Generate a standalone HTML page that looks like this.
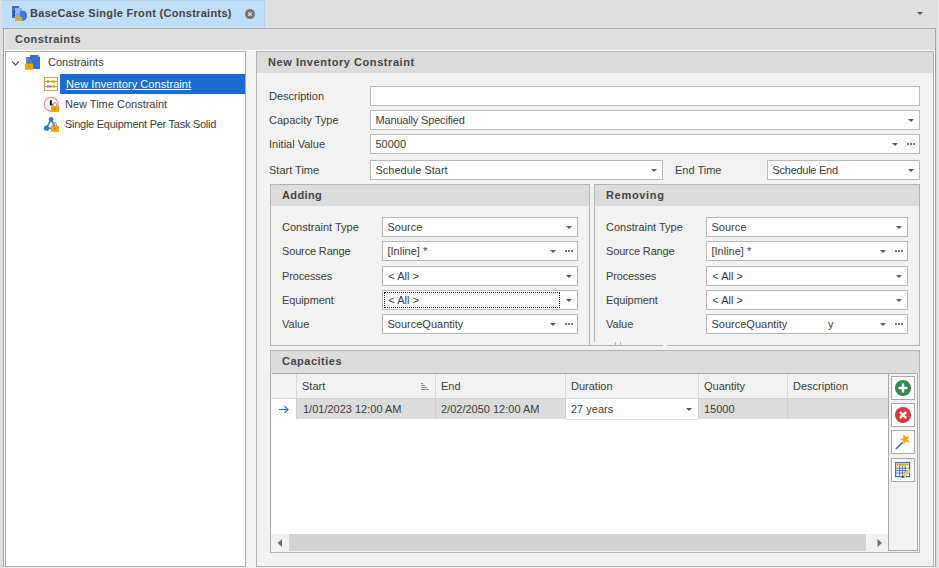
<!DOCTYPE html>
<html><head><meta charset="utf-8"><style>
*{box-sizing:border-box;margin:0;padding:0}
html,body{width:939px;height:568px;overflow:hidden}
body{background:#dfdfdf;position:relative;font-family:"Liberation Sans",sans-serif;font-size:11px;color:#333}
.a{position:absolute}
.t{position:absolute;white-space:pre;line-height:13px;color:#3c3c3c}
.b{font-weight:bold;color:#454545}
.box{position:absolute;background:#fff;border:1px solid #b9b9b9}
.arr{position:absolute;width:0;height:0;border-left:3.5px solid transparent;border-right:3.5px solid transparent;border-top:3.5px solid #5a5a5a}
.ell{position:absolute;width:8px;height:2px;background:linear-gradient(90deg,#767676 0 2px,transparent 2px 3px,#767676 3px 5px,transparent 5px 6px,#767676 6px 8px)}
</style></head><body>
<div class="a" style="left:2px;top:0px;width:263px;height:28px;background:#bfdef9;border-top:1px solid #b5d0ea;border-right:1px solid #b5cfe8"></div>
<div class="t b" style="left:30px;top:7px;letter-spacing:0.3px">BaseCase Single Front (Constraints)</div>
<svg class="a" style="left:245px;top:9px" width="11" height="11" viewBox="0 0 11 11"><circle cx="5" cy="5.1" r="5" fill="#747474"/><path d="M3.3 3.4 L6.7 6.8 M6.7 3.4 L3.3 6.8" stroke="#d0e6fa" stroke-width="1.3"/></svg>
<div class="arr" style="left:917px;top:12px;border-top-color:#555"></div>
<svg class="a" style="left:11px;top:5px" width="17" height="17" viewBox="0 0 17 17">
<rect x="1" y="1" width="7" height="12" fill="#3b70c6"/>
<circle cx="3.3" cy="6.3" r="0.8" fill="#0b2c80"/><circle cx="3.3" cy="8.3" r="0.8" fill="#0b2c80"/><circle cx="3.3" cy="10.5" r="0.8" fill="#0b2c80"/>
<rect x="4" y="3" width="7" height="13" fill="#8db8ef"/>
<path d="M9 5.7 H12.5 A3.5 5 0 0 1 12.5 15.7 H9 Z" fill="#3c7bd9"/>
<path d="M6 13 V10.5 A1.6 1.6 0 0 1 9.2 10.5 V13" fill="none" stroke="#7d8fa8" stroke-width="1"/>
<rect x="5" y="12" width="6" height="4" fill="#f6a800"/>
<rect x="7.3" y="13.2" width="1.4" height="1.6" fill="#b88a30"/>
</svg>
<div class="a" style="left:2px;top:28px;width:934px;height:1px;background:#a9a9a9;"></div>
<div class="a" style="left:3px;top:29px;width:1px;height:538px;background:#a6a6a6;"></div>
<div class="a" style="left:935px;top:29px;width:1px;height:538px;background:#a6a6a6;"></div>
<div class="a" style="left:938px;top:0px;width:1px;height:568px;background:#ebebeb;"></div>
<div class="t b" style="left:15px;top:33px;letter-spacing:0.45px">Constraints</div>
<div class="a" style="left:4px;top:50px;width:931px;height:1px;background:#fbfbfb;"></div>
<div class="a" style="left:4px;top:29px;width:1px;height:22px;background:#ececec;"></div>
<div class="a" style="left:3px;top:567px;width:933px;height:1px;background:#efefef;"></div>
<div class="a" style="left:5px;top:51px;width:241px;height:516px;border:1px solid #ababab;background:#fff;"></div>
<div class="a" style="left:4px;top:51px;width:1px;height:516px;background:#f2f2f2;"></div>
<div class="a" style="left:246px;top:51px;width:10px;height:516px;background:#f2f2f2;"></div>
<svg class="a" style="left:11px;top:60px" width="9" height="7" viewBox="0 0 9 7"><path d="M1 1.5 L4.5 5 L8 1.5" fill="none" stroke="#5a5a5a" stroke-width="1.3"/></svg>
<svg class="a" style="left:24px;top:54px" width="17" height="17" viewBox="0 0 17 17">
<rect x="2" y="3" width="6" height="12" fill="#3d78cf"/>
<rect x="2.5" y="3.5" width="1" height="5" fill="#7fa6e0"/>
<path d="M6 1 H14 L16 3 V15 H6 Z" fill="#3872c8"/>
<path d="M14 1 L16 3 H14 Z" fill="#8db4ec"/>
<path d="M3 10 V8 A2 2 0 0 1 7 8 V10" fill="none" stroke="#808890" stroke-width="1.1"/>
<rect x="1" y="9.6" width="8" height="6.2" fill="#f5a700"/>
<rect x="4.4" y="12" width="1.3" height="1.6" fill="#a8803a"/>
</svg>
<div class="t " style="left:48px;top:56px;">Constraints</div>
<div class="a" style="left:60px;top:74px;width:185px;height:20px;background:#1c6bd3;"></div>
<div class="t" style="left:66px;top:78px;color:#fff;text-decoration:underline;letter-spacing:0.07px">New Inventory Constraint</div>
<svg class="a" style="left:43px;top:76px" width="17" height="17" viewBox="0 0 17 17">
<rect x="1.5" y="1.5" width="13" height="13" fill="#fff" stroke="#c8a456" stroke-width="1.1"/>
<path d="M1.5 5.5 H14.5 M1.5 10.5 H14.5" stroke="#c8a456" stroke-width="1"/>
<circle cx="5" cy="5.5" r="1.35" fill="#8a8a8a"/>
<rect x="8" y="4.2" width="4.4" height="2.7" rx="1.2" fill="#f7a800"/>
<circle cx="5" cy="10.5" r="1.35" fill="#8a8a8a"/><circle cx="7.6" cy="10.5" r="1.35" fill="#8a8a8a"/>
<circle cx="10.9" cy="10.5" r="1.4" fill="#f7a800"/>
</svg>
<div class="t " style="left:65px;top:98px;">New Time Constraint</div>
<svg class="a" style="left:42px;top:95px" width="18" height="18" viewBox="0 0 18 18">
<circle cx="9.2" cy="9.2" r="6.9" fill="#fff" stroke="#fb8a8a" stroke-width="1.3"/>
<rect x="7.8" y="5.2" width="2" height="5.2" fill="#111"/>
<rect x="9.6" y="9" width="1.8" height="1.4" fill="#333"/>
<path d="M11 11 V9.5 A1.8 1.8 0 0 1 14.6 9.5 V11" fill="none" stroke="#8a8a8a" stroke-width="1"/>
<rect x="9" y="11" width="8" height="6" fill="#f5a700"/>
<rect x="12.3" y="12.6" width="1.3" height="2.8" fill="#a8803a"/>
</svg>
<div class="t " style="left:65px;top:118px;letter-spacing:-0.27px">Single Equipment Per Task Solid</div>
<svg class="a" style="left:42px;top:115px" width="18" height="18" viewBox="0 0 18 18">
<path d="M9.1 4.4 L4.5 13.2 H14 Z" fill="none" stroke="#3b74cf" stroke-width="1.6"/>
<circle cx="9.1" cy="4.4" r="2.4" fill="#3b74cf"/>
<circle cx="4.5" cy="13.2" r="2.6" fill="#3b74cf"/>
<path d="M11 11 V9.5 A1.8 1.8 0 0 1 14.6 9.5 V11" fill="none" stroke="#8a8a8a" stroke-width="1"/>
<rect x="9" y="11" width="8" height="6" fill="#f5a700"/>
<rect x="12.3" y="12.6" width="1.3" height="2.8" fill="#a8803a"/>
</svg>
<div class="a" style="left:49px;top:137px;width:6px;height:1px;background:#e6e6e6;"></div>
<div class="a" style="left:256px;top:51px;width:678px;height:516px;border:1px solid #b3b3b3;background:#f2f2f2;"></div>
<div class="a" style="left:934px;top:51px;width:1px;height:516px;background:#f8f8f8;"></div>
<div class="a" style="left:257px;top:52px;width:676px;height:21px;background:#dcdcdc;"></div>
<div class="t b" style="left:268px;top:56px;letter-spacing:0.56px">New Inventory Constraint</div>
<div class="t " style="left:269px;top:90px;">Description</div>
<div class="a" style="left:370px;top:86px;width:550px;height:20px;border:1px solid #b9b9b9;background:#fff;"></div>
<div class="t " style="left:269px;top:114px;">Capacity Type</div>
<div class="a" style="left:370px;top:110px;width:550px;height:20px;border:1px solid #b9b9b9;background:#fff;"></div>
<div class="t " style="left:375.5px;top:114px;letter-spacing:-0.17px">Manually Specified</div>
<div class="arr" style="left:908px;top:119px"></div>
<div class="t " style="left:269px;top:138px;">Initial Value</div>
<div class="a" style="left:370px;top:134px;width:550px;height:20px;border:1px solid #b9b9b9;background:#fff;"></div>
<div class="t " style="left:375.5px;top:138px;">50000</div>
<div class="arr" style="left:892px;top:143px"></div>
<div class="ell" style="left:907px;top:143px"></div>
<div class="t " style="left:269px;top:164px;">Start Time</div>
<div class="a" style="left:370px;top:160px;width:293px;height:20px;border:1px solid #b9b9b9;background:#fff;"></div>
<div class="t " style="left:375.5px;top:164px;">Schedule Start</div>
<div class="arr" style="left:651px;top:169px"></div>
<div class="t " style="left:675px;top:164px;">End Time</div>
<div class="a" style="left:767px;top:160px;width:153px;height:20px;border:1px solid #b9b9b9;background:#fff;"></div>
<div class="t " style="left:772.5px;top:164px;letter-spacing:-0.27px">Schedule End</div>
<div class="arr" style="left:908px;top:169px"></div>
<div class="a" style="left:270px;top:184px;width:320px;height:162px;border:1px solid #b3b3b3;background:transparent;"></div>
<div class="a" style="left:271px;top:185px;width:318px;height:21px;background:#dcdcdc;"></div>
<div class="t b" style="left:282px;top:189px;letter-spacing:0.38px">Adding</div>
<div class="t " style="left:282px;top:221px;letter-spacing:0px">Constraint Type</div>
<div class="a" style="left:382px;top:217px;width:196px;height:20px;border:1px solid #b9b9b9;background:#fff;"></div>
<div class="t " style="left:387.5px;top:221px;">Source</div>
<div class="arr" style="left:566px;top:226px"></div>
<div class="t " style="left:282px;top:245px;letter-spacing:-0.15px">Source Range</div>
<div class="a" style="left:382px;top:241px;width:196px;height:20px;border:1px solid #b9b9b9;background:#fff;"></div>
<div class="t " style="left:387.5px;top:245px;">[Inline] *</div>
<div class="arr" style="left:550px;top:250px"></div>
<div class="ell" style="left:565px;top:250px"></div>
<div class="t " style="left:282px;top:270px;letter-spacing:-0.15px">Processes</div>
<div class="a" style="left:382px;top:266px;width:196px;height:20px;border:1px solid #b9b9b9;background:#fff;"></div>
<div class="t " style="left:388.3px;top:270px;">&lt; All &gt;</div>
<div class="arr" style="left:566px;top:275px"></div>
<div class="t " style="left:282px;top:294px;letter-spacing:-0.1px">Equipment</div>
<div class="a" style="left:382px;top:290px;width:196px;height:20px;border:1px solid #b9b9b9;background:#fff;"></div>
<div class="t " style="left:388.3px;top:294px;">&lt; All &gt;</div>
<div class="arr" style="left:566px;top:299px"></div>
<div class="a" style="left:384px;top:292px;width:176px;height:16px;border:1px dotted #222"></div>
<div class="t " style="left:282px;top:318px;letter-spacing:0px">Value</div>
<div class="a" style="left:382px;top:314px;width:196px;height:20px;border:1px solid #b9b9b9;background:#fff;"></div>
<div class="t " style="left:387.5px;top:318px;">SourceQuantity</div>
<div class="arr" style="left:550px;top:323px"></div>
<div class="ell" style="left:565px;top:323px"></div>
<div class="a" style="left:594px;top:184px;width:326px;height:1px;background:#b3b3b3;"></div>
<div class="a" style="left:594px;top:184px;width:1px;height:158px;background:#b3b3b3;"></div>
<div class="a" style="left:919px;top:184px;width:1px;height:162px;background:#b3b3b3;"></div>
<div class="a" style="left:590px;top:345px;width:73px;height:1px;background:#b3b3b3;"></div>
<div class="a" style="left:667px;top:345px;width:253px;height:1px;background:#b3b3b3;"></div>
<div class="a" style="left:615px;top:342px;width:1px;height:3px;background:#b3b3b3;"></div>
<div class="a" style="left:620px;top:342px;width:1px;height:3px;background:#b3b3b3;"></div>
<div class="a" style="left:595px;top:185px;width:324px;height:21px;background:#dcdcdc;"></div>
<div class="t b" style="left:606px;top:189px;letter-spacing:0.68px">Removing</div>
<div class="t " style="left:606px;top:221px;letter-spacing:0px">Constraint Type</div>
<div class="a" style="left:706px;top:217px;width:202px;height:20px;border:1px solid #b9b9b9;background:#fff;"></div>
<div class="t " style="left:711.5px;top:221px;">Source</div>
<div class="arr" style="left:896px;top:226px"></div>
<div class="t " style="left:606px;top:245px;letter-spacing:-0.15px">Source Range</div>
<div class="a" style="left:706px;top:241px;width:202px;height:20px;border:1px solid #b9b9b9;background:#fff;"></div>
<div class="t " style="left:711.5px;top:245px;">[Inline] *</div>
<div class="arr" style="left:880px;top:250px"></div>
<div class="ell" style="left:895px;top:250px"></div>
<div class="t " style="left:606px;top:270px;letter-spacing:-0.15px">Processes</div>
<div class="a" style="left:706px;top:266px;width:202px;height:20px;border:1px solid #b9b9b9;background:#fff;"></div>
<div class="t " style="left:712.3px;top:270px;">&lt; All &gt;</div>
<div class="arr" style="left:896px;top:275px"></div>
<div class="t " style="left:606px;top:294px;letter-spacing:-0.1px">Equipment</div>
<div class="a" style="left:706px;top:290px;width:202px;height:20px;border:1px solid #b9b9b9;background:#fff;"></div>
<div class="t " style="left:712.3px;top:294px;">&lt; All &gt;</div>
<div class="arr" style="left:896px;top:299px"></div>
<div class="t " style="left:606px;top:318px;letter-spacing:0px">Value</div>
<div class="a" style="left:706px;top:314px;width:202px;height:20px;border:1px solid #b9b9b9;background:#fff;"></div>
<div class="t " style="left:711.5px;top:318px;">SourceQuantity</div>
<div class="t " style="left:828px;top:318px;">y</div>
<div class="arr" style="left:880px;top:323px"></div>
<div class="ell" style="left:895px;top:323px"></div>
<div class="a" style="left:270px;top:350px;width:650px;height:203px;border:1px solid #b3b3b3;background:transparent;"></div>
<div class="a" style="left:271px;top:351px;width:648px;height:22px;background:#dcdcdc;"></div>
<div class="t b" style="left:282px;top:355px;letter-spacing:0.5px">Capacities</div>
<div class="a" style="left:270px;top:373px;width:619px;height:178px;background:#fff;border-top:1px solid #a9a9a9;border-left:1px solid #a9a9a9;border-right:1px solid #a9a9a9"></div>
<div class="a" style="left:271px;top:551px;width:648px;height:1px;background:#f2f2f2;"></div>
<div class="a" style="left:271px;top:373px;width:1px;height:25px;background:#f2f2f2;"></div>
<div class="a" style="left:272px;top:374px;width:616px;height:24px;background:#f2f2f2;"></div>
<div class="a" style="left:271px;top:398px;width:617px;height:1px;background:#d4d4d4;"></div>
<div class="a" style="left:296px;top:374px;width:1px;height:24px;background:#dadada;"></div>
<div class="a" style="left:435px;top:374px;width:1px;height:24px;background:#dadada;"></div>
<div class="a" style="left:565px;top:374px;width:1px;height:24px;background:#dadada;"></div>
<div class="a" style="left:698px;top:374px;width:1px;height:24px;background:#dadada;"></div>
<div class="a" style="left:787px;top:374px;width:1px;height:24px;background:#dadada;"></div>
<div class="a" style="left:297px;top:399px;width:591px;height:20px;background:#dcdcdc;"></div>
<div class="a" style="left:566px;top:399px;width:132px;height:20px;background:#fff;"></div>
<div class="a" style="left:566px;top:419px;width:132px;height:1px;background:#dddddd;"></div>
<div class="a" style="left:296px;top:399px;width:1px;height:20px;background:#cfcfcf;"></div>
<div class="a" style="left:435px;top:399px;width:1px;height:20px;background:#cfcfcf;"></div>
<div class="a" style="left:565px;top:399px;width:1px;height:20px;background:#cfcfcf;"></div>
<div class="a" style="left:698px;top:399px;width:1px;height:20px;background:#cfcfcf;"></div>
<div class="a" style="left:787px;top:399px;width:1px;height:20px;background:#cfcfcf;"></div>
<div class="t " style="left:302px;top:380px;">Start</div>
<div class="t " style="left:441px;top:380px;">End</div>
<div class="t " style="left:571px;top:380px;">Duration</div>
<div class="t " style="left:704px;top:380px;">Quantity</div>
<div class="t " style="left:793px;top:380px;">Description</div>
<svg class="a" style="left:420px;top:382px" width="10" height="9" viewBox="0 0 10 9"><path d="M1 1.5H3 M1 3.5H5 M1 5.5H7 M1 7.5H9" stroke="#8a8a8a" stroke-width="1"/></svg>
<div class="t " style="left:303px;top:403px;">1/01/2023 12:00 AM</div>
<div class="t " style="left:441px;top:403px;">2/02/2050 12:00 AM</div>
<div class="t " style="left:571px;top:403px;">27 years</div>
<div class="arr" style="left:686px;top:408px"></div>
<div class="t " style="left:704px;top:403px;">15000</div>
<svg class="a" style="left:277px;top:404px" width="13" height="11" viewBox="0 0 13 11"><path d="M2 5.5 H11 M7.5 2 L11 5.5 L7.5 9" fill="none" stroke="#2a6cd6" stroke-width="1.1"/></svg>
<div class="a" style="left:271px;top:534px;width:617px;height:18px;background:#f2f2f2;"></div>
<div class="a" style="left:289px;top:534px;width:577px;height:17px;background:#d3d3d3;"></div>
<svg class="a" style="left:276px;top:538px" width="8" height="10" viewBox="0 0 8 10"><path d="M6 1 L1.5 5 L6 9 Z" fill="#707070"/></svg>
<svg class="a" style="left:876px;top:538px" width="8" height="10" viewBox="0 0 8 10"><path d="M1.5 1 L6 5 L1.5 9 Z" fill="#707070"/></svg>
<div class="a" style="left:888px;top:373px;width:30px;height:178px;border:1px solid #a9a9a9;background:#f2f2f2;"></div>
<div class="a" style="left:891px;top:376px;width:24px;height:24px;border:1px solid #a9a9a9;background:#fff;"></div>
<div class="a" style="left:891px;top:403px;width:24px;height:24px;border:1px solid #a9a9a9;background:#fff;"></div>
<div class="a" style="left:891px;top:430px;width:24px;height:24px;border:1px solid #a9a9a9;background:#fff;"></div>
<div class="a" style="left:891px;top:458px;width:24px;height:24px;border:1px solid #a9a9a9;background:#fff;"></div>
<svg class="a" style="left:894px;top:379px" width="18" height="18" viewBox="0 0 18 18"><circle cx="9" cy="9" r="8" fill="#2e8b4e"/><path d="M9 4.5 V13.5 M4.5 9 H13.5" stroke="#fff" stroke-width="2.4"/></svg>
<svg class="a" style="left:894px;top:406px" width="18" height="18" viewBox="0 0 18 18"><circle cx="9" cy="9" r="8" fill="#e0343f"/><path d="M5.8 5.8 L12.2 12.2 M12.2 5.8 L5.8 12.2" stroke="#fff" stroke-width="2.4"/></svg>
<svg class="a" style="left:894px;top:433px" width="18" height="18" viewBox="0 0 18 18"><path d="M1.8 16 L9 9.2" stroke="#3a6fcf" stroke-width="1.6"/><g transform="translate(11.2 6.4) rotate(-20)"><path d="M0 -5.4 L1.5 -1.9 L5.2 -1.7 L2.3 0.7 L3.3 4.4 L0 2.3 L-3.3 4.4 L-2.3 0.7 L-5.2 -1.7 L-1.5 -1.9 Z" fill="#f6a800"/></g></svg>
<svg class="a" style="left:894px;top:460px" width="18" height="18" viewBox="0 0 18 18">
<rect x="1.6" y="2.6" width="14" height="14" fill="#fff" stroke="#3a6fcf" stroke-width="1.2"/>
<rect x="2.5" y="3.6" width="12" height="2" fill="#f6a800"/>
<path d="M2 8.2 H15.5 M2 10.6 H15.5 M2 13 H15.5 M5.6 5.6 V16 M8.4 5.6 V16 M11.2 5.6 V16" stroke="#3a6fcf" stroke-width="0.9"/>
<path d="M8.6 15.4 L14.6 9.4 L16.6 11.4 L10.6 17.4 Z" fill="#f8c85a"/>
<path d="M8.6 15.4 L10.6 17.4 L7.6 18 Z" fill="#3a4050"/>
</svg>
</body></html>
